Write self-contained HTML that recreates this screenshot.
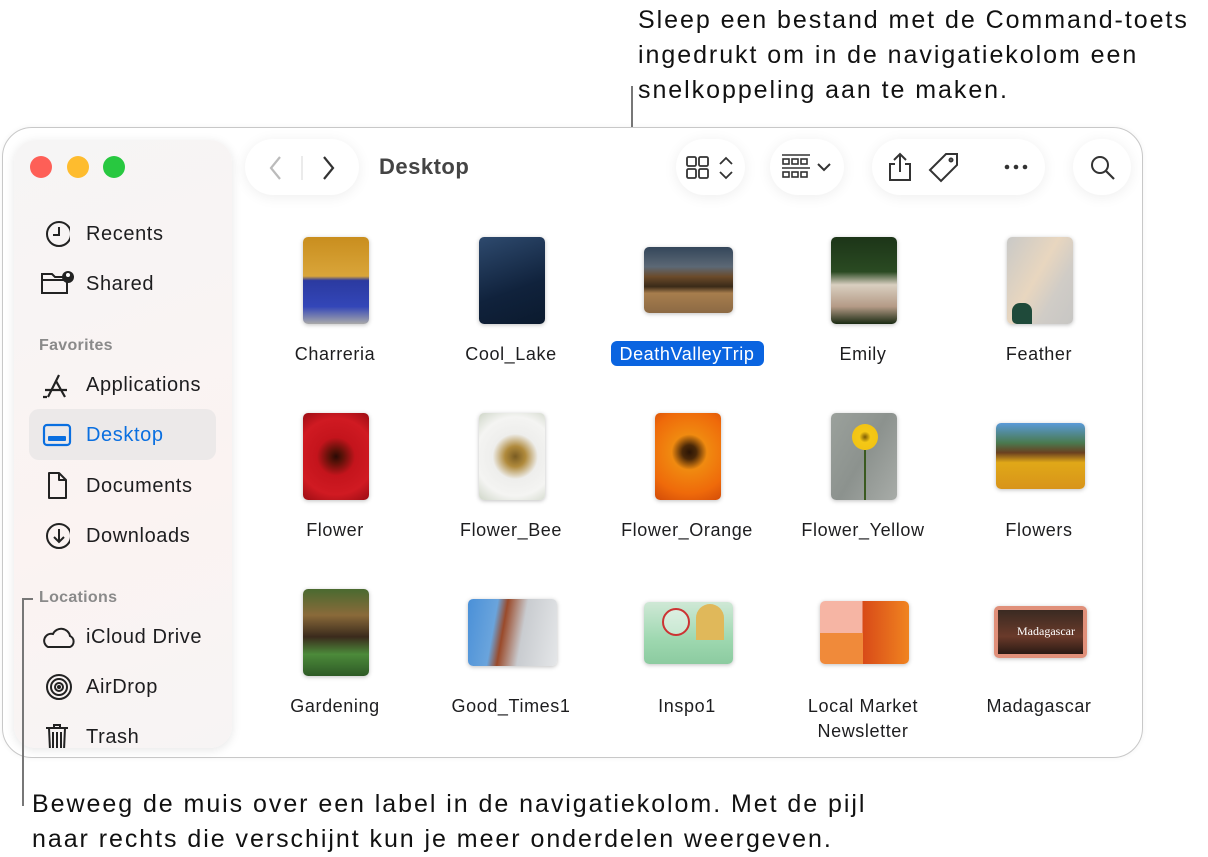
<!DOCTYPE html>
<html><head><meta charset="utf-8"><style>
*{margin:0;padding:0;box-sizing:border-box}
body{width:1208px;height:857px;background:#fff;font-family:"Liberation Sans",sans-serif;position:relative;overflow:hidden;color:#1d1d1f}
.abs{position:absolute}
.call{font-size:25px;line-height:35px;color:#111;position:absolute;letter-spacing:1.95px;white-space:nowrap}
.win{left:2px;top:127px;width:1141px;height:631px;border:1.5px solid #c8c8c8;border-radius:30px;background:#fff;box-shadow:0 0 6px rgba(0,0,0,.05)}
.side{left:14px;top:140px;width:218px;height:608px;border-radius:22px;background:linear-gradient(160deg,#f6f5f5,#fbf3f2 60%,#f7f4f4);box-shadow:0 2px 10px rgba(0,0,0,.10);overflow:hidden}
.dot{width:22px;height:22px;border-radius:50%;top:156px}
.si{left:26px;font-size:20px;color:#1d1d1f;height:28px;line-height:28px;letter-spacing:0.6px;width:190px}
.si svg{position:absolute;left:0;top:0}
.si span{position:absolute;left:46px;white-space:nowrap}
.hd{left:25px;font-size:16px;font-weight:bold;color:#8a8a8a;letter-spacing:0.3px}
.pill{background:#fff;border-radius:30px;height:56px;top:139px;box-shadow:0 2px 14px rgba(0,0,0,.07)}
.th{position:absolute;border-radius:5px;box-shadow:0 1px 4px rgba(0,0,0,.25)}
.lb{position:absolute;font-size:18px;width:176px;text-align:center;color:#1d1d1f;line-height:25px;letter-spacing:0.6px;white-space:nowrap}
</style></head><body>

<div class="call" style="left:638px;top:3px">Sleep een bestand met de Command-toets<br>ingedrukt om in de navigatiekolom een<br>snelkoppeling aan te maken.</div>
<div class="abs" style="left:631px;top:86px;width:2px;height:256px;background:#777"></div>

<div class="abs win"></div>
<div class="abs side">
<div class="abs si" style="top:80px"><svg width="30" height="28" viewBox="0 0 30 28"><circle cx="19" cy="14" r="12" fill="none" stroke="#222" stroke-width="2"/><path d="M19 7v8h-6" fill="none" stroke="#222" stroke-width="2"/></svg><span>Recents</span></div>
<div class="abs si" style="top:130px"><svg width="36" height="28" viewBox="0 0 36 28"><path d="M2 4h10l3 3h12v16H2z M2 10h22" fill="none" stroke="#222" stroke-width="2"/><circle cx="28" cy="7" r="6" fill="#222"/><circle cx="28" cy="5" r="2" fill="#fff"/></svg><span>Shared</span></div>
<div class="abs hd" style="top:197px">Favorites</div>
<div class="abs si" style="top:231px"><svg width="30" height="28" viewBox="0 0 30 28"><path d="M8 26L19 4M16 10l9 16M5 19h22M3 26h4" fill="none" stroke="#222" stroke-width="2.2"/></svg><span>Applications</span></div>
<div class="abs" style="left:15px;top:269px;width:187px;height:51px;border-radius:10px;background:#ece9e9"></div>
<div class="abs si" style="top:281px;color:#0a6fe0"><svg width="32" height="28" viewBox="0 0 32 28"><rect x="4" y="4" width="26" height="20" rx="3" fill="none" stroke="#0a6fe0" stroke-width="2.2"/><rect x="8" y="15" width="18" height="5" rx="1" fill="#0a6fe0"/></svg><span>Desktop</span></div>
<div class="abs si" style="top:332px"><svg width="30" height="28" viewBox="0 0 30 28"><path d="M9 1h10l7 7v18H9z M19 1v7h7" fill="none" stroke="#222" stroke-width="2" stroke-linejoin="round"/></svg><span>Documents</span></div>
<div class="abs si" style="top:382px"><svg width="30" height="28" viewBox="0 0 30 28"><circle cx="19" cy="14" r="12" fill="none" stroke="#222" stroke-width="2"/><path d="M19 7v13M14 15l5 5 5-5" fill="none" stroke="#222" stroke-width="2"/></svg><span>Downloads</span></div>
<div class="abs hd" style="top:449px">Locations</div>
<div class="abs si" style="top:483px"><svg width="36" height="28" viewBox="0 0 36 28"><path d="M8 24h22a6 6 0 0 0 0-11 9 9 0 0 0-17-2 7 7 0 0 0-5 13z" fill="none" stroke="#222" stroke-width="2"/></svg><span>iCloud Drive</span></div>
<div class="abs si" style="top:533px"><svg width="32" height="28" viewBox="0 0 32 28"><g fill="none" stroke="#222" stroke-width="2"><circle cx="19" cy="14" r="12"/><circle cx="19" cy="14" r="8"/><circle cx="19" cy="14" r="4"/></g><circle cx="19" cy="14" r="2" fill="#222"/></svg><span>AirDrop</span></div>
<div class="abs si" style="top:583px"><svg width="30" height="28" viewBox="0 0 30 28"><path d="M6 5h22M14 5V2h6v3M9 5l1 22h14l1-22M13 9v16M17 9v16M21 9v16" fill="none" stroke="#222" stroke-width="2"/></svg><span>Trash</span></div>
</div>
<div class="abs dot" style="left:30px;background:#fe5f57"></div>
<div class="abs dot" style="left:67px;background:#febc2e"></div>
<div class="abs dot" style="left:103px;background:#28c840"></div>

<!-- toolbar -->
<div class="abs pill" style="left:245px;width:114px"></div>
<svg class="abs" style="left:264px;top:154px" width="80" height="28"><path d="M16 3L7 14l9 11" fill="none" stroke="#bbb" stroke-width="2.2"/><line x1="38" y1="2" x2="38" y2="26" stroke="#e4e4e4" stroke-width="1.5"/><path d="M60 3l9 11-9 11" fill="none" stroke="#333" stroke-width="2.2"/></svg>
<div class="abs" style="left:379px;top:154px;font-size:22px;font-weight:bold;color:#444;letter-spacing:0.5px">Desktop</div>
<div class="abs pill" style="left:676px;width:69px"></div>
<svg class="abs" style="left:685px;top:155px" width="52" height="26"><g fill="none" stroke="#333" stroke-width="1.8"><rect x="2" y="2" width="9" height="9" rx="1.5"/><rect x="14" y="2" width="9" height="9" rx="1.5"/><rect x="2" y="14" width="9" height="9" rx="1.5"/><rect x="14" y="14" width="9" height="9" rx="1.5"/><path d="M35 9l6-6 6 6M35 17l6 6 6-6"/></g></svg>
<div class="abs pill" style="left:770px;width:74px"></div>
<svg class="abs" style="left:780px;top:153px" width="56" height="30"><g fill="none" stroke="#333" stroke-width="1.6"><line x1="2" y1="2" x2="30" y2="2"/><rect x="3" y="6" width="6" height="5"/><rect x="12" y="6" width="6" height="5"/><rect x="21" y="6" width="6" height="5"/><line x1="2" y1="15" x2="30" y2="15"/><rect x="3" y="19" width="6" height="5"/><rect x="12" y="19" width="6" height="5"/><rect x="21" y="19" width="6" height="5"/><path d="M38 11l6 6 6-6" stroke-width="2"/></g></svg>
<div class="abs pill" style="left:872px;width:173px"></div>
<svg class="abs" style="left:884px;top:150px" width="150" height="36"><g fill="none" stroke="#333" stroke-width="2"><path d="M16 4v18M10 10l6-6 6 6M11 14H6v16h20V14h-5"/><path d="M73 4h-11L46 20l11 11 16-16z"/><circle cx="67" cy="10" r="1.5"/></g><g fill="#333"><circle cx="123" cy="17" r="2.3"/><circle cx="132" cy="17" r="2.3"/><circle cx="141" cy="17" r="2.3"/></g></svg>
<div class="abs pill" style="left:1073px;width:58px"></div>
<svg class="abs" style="left:1089px;top:154px" width="28" height="28"><circle cx="11" cy="11" r="8" fill="none" stroke="#333" stroke-width="2"/><path d="M17 17l8 8" stroke="#333" stroke-width="2.2"/></svg>

<!-- thumbnails row1 -->
<div class="th" style="left:303px;top:237px;width:66px;height:87px;background:linear-gradient(#c98e1e 0,#d9a53a 45%,#2b3aa0 50%,#3346b8 80%,#a9a9a9 100%)"></div>
<div class="th" style="left:479px;top:237px;width:66px;height:87px;background:linear-gradient(160deg,#2e4a6e,#10223c 60%,#0b1a2e)"></div>
<div class="th" style="left:644px;top:247px;width:89px;height:66px;background:linear-gradient(#34465a 0,#5c6875 30%,#6b4a2a 45%,#3a2a18 60%,#a77d4d 70%,#8c6a44 100%)"></div>
<div class="th" style="left:831px;top:237px;width:66px;height:87px;background:linear-gradient(#1c3518,#2a4a22 40%,#d9cfc0 55%,#b49a86 80%,#1a2a12)"></div>
<div class="th" style="left:1007px;top:237px;width:66px;height:87px;background:linear-gradient(120deg,#c9c9c7,#e8d6bf 45%,#d0ccc6 70%,#c7c6c4);"></div>
<div class="abs" style="left:1012px;top:303px;width:20px;height:21px;background:#1f4a3a;border-radius:8px 8px 0 5px"></div>
<div class="lb" style="left:247px;top:342px">Charreria</div>
<div class="lb" style="left:423px;top:342px">Cool_Lake</div>
<div class="abs" style="left:611px;top:341px;width:153px;height:25px;border-radius:6px;background:#0a64e0"></div>
<div class="lb" style="left:599px;top:342px;color:#fff">DeathValleyTrip</div>
<div class="lb" style="left:775px;top:342px">Emily</div>
<div class="lb" style="left:951px;top:342px">Feather</div>

<!-- row2 -->
<div class="th" style="left:303px;top:413px;width:66px;height:87px;background:radial-gradient(circle at 50% 50%,#2a0a05 0,#5a1208 12%,#c4141c 35%,#d01a22 70%,#9a0d14 100%)"></div>
<div class="th" style="left:479px;top:413px;width:66px;height:87px;background:radial-gradient(circle at 55% 50%,#7a5c22 0,#b08a3c 18%,#eeeeec 40%,#f4f4f2 70%,#cfd6c8 100%)"></div>
<div class="th" style="left:655px;top:413px;width:66px;height:87px;background:radial-gradient(circle at 52% 45%,#2a1405 0,#4a2808 12%,#f08a10 30%,#ef6a0a 70%,#d14a08 100%)"></div>
<div class="th" style="left:831px;top:413px;width:66px;height:87px;background:linear-gradient(120deg,#9ba19c,#8c928e 50%,#a8aca8)"></div>
<div class="abs" style="left:852px;top:424px;width:26px;height:26px;border-radius:50%;background:radial-gradient(#7a5a05 0,#f5c816 30%,#f0c010 100%)"></div>
<div class="abs" style="left:864px;top:450px;width:2px;height:50px;background:#3a5a20"></div>
<div class="th" style="left:996px;top:423px;width:89px;height:66px;background:linear-gradient(#5a9ad8 0,#4a7a50 30%,#6a4020 45%,#e0a818 60%,#d8941a 100%)"></div>
<div class="lb" style="left:247px;top:518px">Flower</div>
<div class="lb" style="left:423px;top:518px">Flower_Bee</div>
<div class="lb" style="left:599px;top:518px">Flower_Orange</div>
<div class="lb" style="left:775px;top:518px">Flower_Yellow</div>
<div class="lb" style="left:951px;top:518px">Flowers</div>

<!-- row3 -->
<div class="th" style="left:303px;top:589px;width:66px;height:87px;background:linear-gradient(#4a6a30,#8a6a3a 30%,#3a2a1c 55%,#4c8a3a 75%,#2e5a26)"></div>
<div class="th" style="left:468px;top:599px;width:89px;height:67px;background:linear-gradient(100deg,#4a90d8 0,#6aa4dc 30%,#9a4a2a 40%,#c9ccd0 60%,#e4e6e8 100%)"></div>
<div class="th" style="left:644px;top:602px;width:89px;height:62px;background:linear-gradient(#cfe8d6,#9ed8b0 60%,#8ccba0)"></div>
<div class="abs" style="left:696px;top:604px;width:28px;height:36px;border-radius:14px 14px 0 0;background:#e0b85a"></div>
<div class="abs" style="left:662px;top:608px;width:28px;height:28px;border-radius:50%;border:2px solid #c33;background:rgba(255,255,255,.4)"></div>
<div class="th" style="left:820px;top:601px;width:89px;height:63px;background:linear-gradient(90deg,#f6b5a4 0,#f6b5a4 48%,#d84a18 48%,#f08420 100%)"></div>
<div class="abs" style="left:820px;top:633px;width:43px;height:31px;background:#f08a3a;border-radius:0 0 0 5px"></div>
<div class="th" style="left:994px;top:606px;width:93px;height:52px;background:#e0907a"></div>
<div class="abs" style="left:998px;top:610px;width:85px;height:44px;background:linear-gradient(#3a2a22,#6a3a2a 60%,#2a1a14)"></div>
<div class="abs" style="left:1017px;top:624px;font-family:'Liberation Serif',serif;font-size:12px;color:#fff">Madagascar</div>
<div class="lb" style="left:247px;top:694px">Gardening</div>
<div class="lb" style="left:423px;top:694px">Good_Times1</div>
<div class="lb" style="left:599px;top:694px">Inspo1</div>
<div class="lb" style="left:775px;top:694px">Local Market<br>Newsletter</div>
<div class="lb" style="left:951px;top:694px">Madagascar</div>

<!-- bottom callout -->
<div class="abs" style="left:22px;top:598px;width:2px;height:208px;background:#777"></div>
<div class="abs" style="left:22px;top:598px;width:11px;height:2px;background:#777"></div>
<div class="call" style="left:32px;top:787px">Beweeg de muis over een label in de navigatiekolom. Met de pijl<br>naar rechts die verschijnt kun je meer onderdelen weergeven.</div>
</body></html>
